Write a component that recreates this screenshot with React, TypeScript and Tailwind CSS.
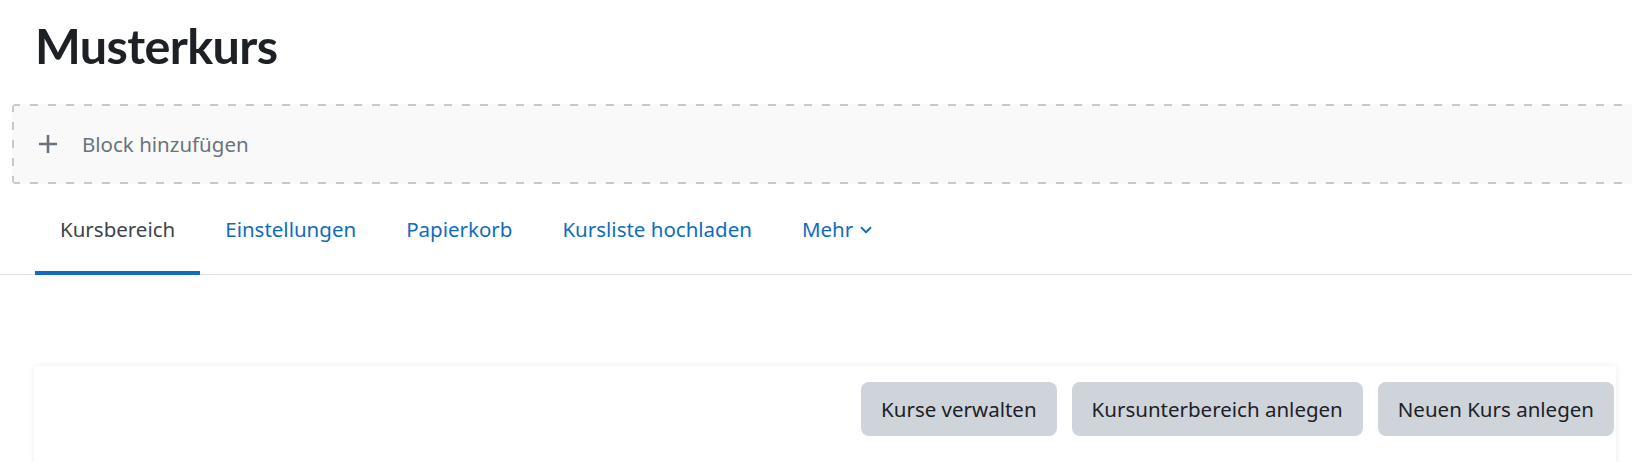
import { ChevronDown } from "lucide-react";

const TABS = [
  { label: "Kursbereich", active: true },
  { label: "Einstellungen" },
  { label: "Papierkorb" },
  { label: "Kursliste hochladen" },
  { label: "Mehr", menu: true },
];

const ACTIONS = ["Kurse verwalten", "Kursunterbereich anlegen", "Neuen Kurs anlegen"];

export default function App() {
  return (
    <div className="w-[1632px] h-[462px] overflow-hidden bg-white text-[#1d2125] font-['Noto_Sans',sans-serif]">
      <div className="pl-[35px] pt-[15px] h-[104px]">
        <h1 className="font-['Lato',sans-serif] text-[48.5px] leading-[60px] font-bold tracking-[-0.6px]">Musterkurs</h1>
      </div>

      {/* add block region, dashed edge drawn with gradients */}
      <div className="ml-[12px] w-[1640px] h-[80px] rounded-[4px] [background:repeating-linear-gradient(90deg,#c8c8c8_0_8px,transparent_8px_18px)_0_0/100%_2px_no-repeat,repeating-linear-gradient(90deg,#c8c8c8_0_8px,transparent_8px_18px)_0_100%/100%_2px_no-repeat,repeating-linear-gradient(180deg,#c8c8c8_0_8px,transparent_8px_18px)_0_0/2px_100%_no-repeat,#f9f9f9] flex items-center pl-[26px] text-[#6a737b]">
        <svg width="20" height="20" viewBox="0 0 20 20" className="mr-[24px]">
          <path d="M10 1v18M1 10h18" stroke="#6a737b" strokeWidth="2.6" />
        </svg>
        <span className="text-[20.5px]">Block hinzufügen</span>
      </div>

      <div className="h-[91px] border-b border-[#dee2e6]">
        <div className="flex h-full pl-[35px]">
          {TABS.map((t) => (
            <div
              key={t.label}
              className={`relative flex items-center px-[25px] text-[20.5px] ${
                t.active ? "text-[#404448]" : "text-[#0f6cbf]"
              }`}
            >
              {t.label}
              {t.menu && <ChevronDown className="w-[18px] h-[18px] ml-[4px] mt-[2px]" strokeWidth={2.4} />}
              {t.active && <div className="absolute left-0 right-0 bottom-[-1px] h-[4px] bg-[#0f6cbf]" />}
            </div>
          ))}
        </div>
      </div>

      <div className="mt-[91px] ml-[34px] w-[1582px] h-[120px] bg-white shadow-[0_0_6px_rgba(0,0,0,0.08)] pt-[16px] flex justify-end gap-[15px] pr-[2px]">
        {ACTIONS.map((a) => (
          <button
            key={a}
            className="h-[54px] px-[20px] rounded-[8px] bg-[#ced4da] text-[20.5px] text-[#1d2125]"
          >
            {a}
          </button>
        ))}
      </div>
    </div>
  );
}
